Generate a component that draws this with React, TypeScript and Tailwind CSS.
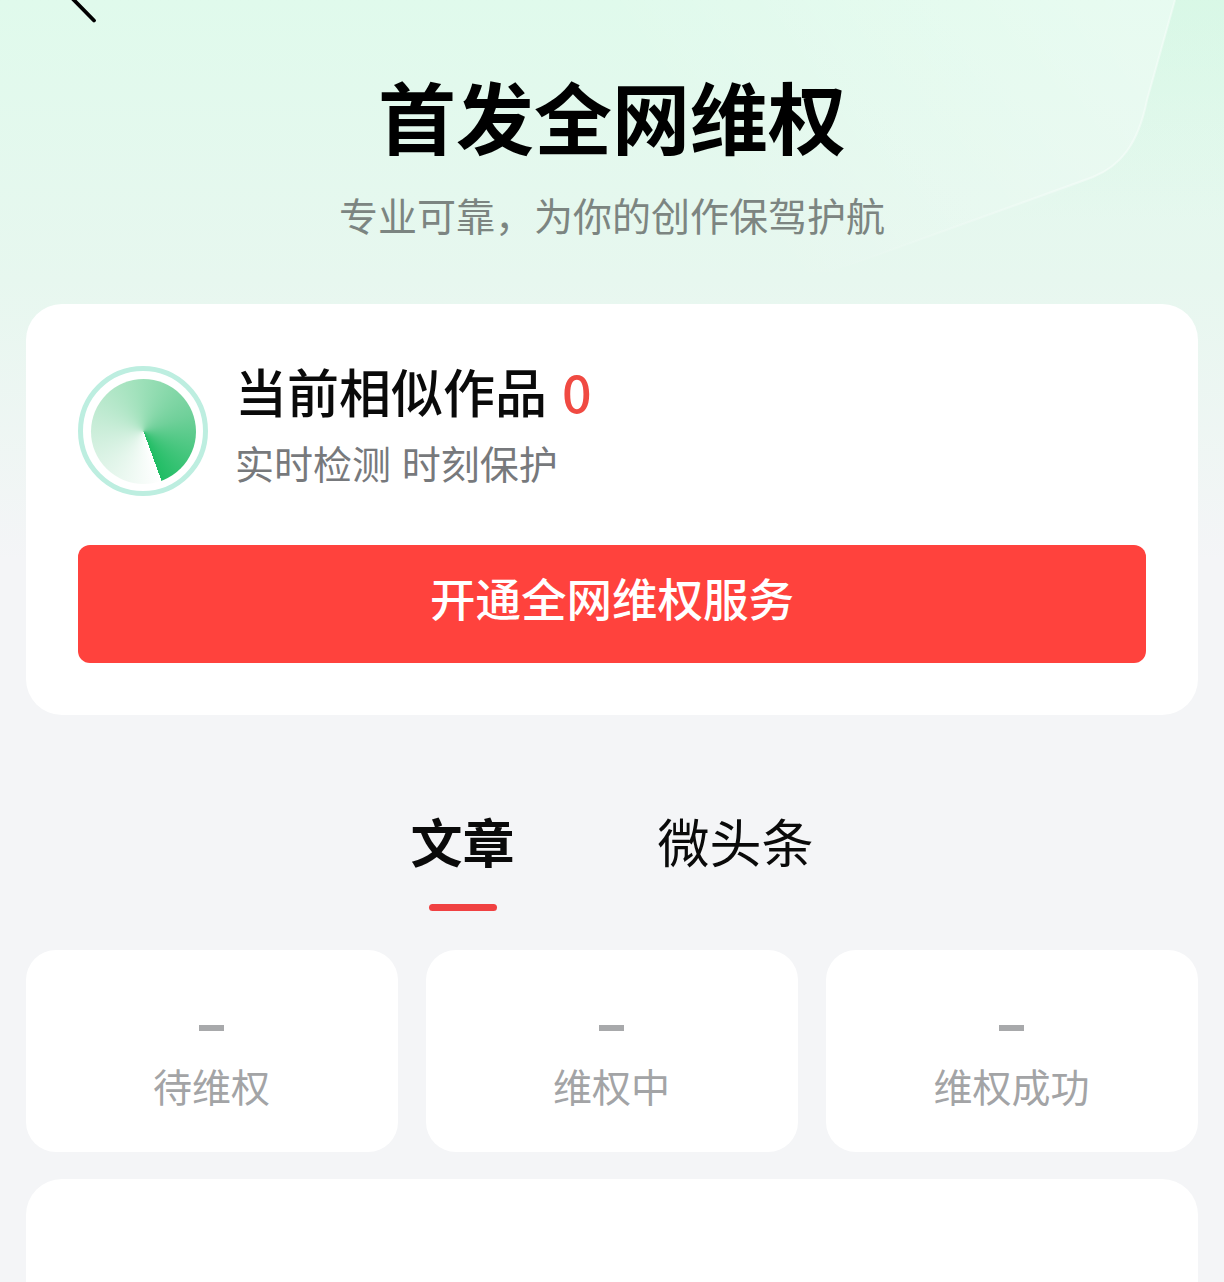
const font = { fontFamily: '"Noto Sans CJK SC", "Noto Sans", sans-serif' };

function Stat({ label }: { label: string }) {
  return (
    <div className="flex h-[202px] flex-col items-center rounded-[30px] bg-white pt-[75px]">
      <div className="-ml-[1px] h-[6px] w-[25px] bg-[#a8a9ab]" />
      <div className="-ml-[1px] mt-[29px] text-[39px] leading-[50px] text-[#a3a4a6]">{label}</div>
    </div>
  );
}

export default function App() {
  return (
    <div style={font} className="relative h-[1282px] w-[1224px] overflow-hidden bg-[#f4f5f7]">
      <div className="absolute inset-x-0 top-0 h-[560px] bg-gradient-to-b from-[#e0faec] via-[#e7f7ef] via-50% to-[#f4f5f7]" />
      <svg className="absolute left-0 top-0" width="1224" height="320" viewBox="0 0 1224 320" fill="none">
        <defs>
          <linearGradient id="inner" gradientUnits="userSpaceOnUse" x1="780" y1="300" x2="1150" y2="60">
            <stop offset="0" stopColor="#ffffff" stopOpacity="0" />
            <stop offset="1" stopColor="#ffffff" stopOpacity="0.24" />
          </linearGradient>
          <linearGradient id="outer" x1="0" y1="0" x2="0" y2="1">
            <stop offset="0" stopColor="#cff5df" stopOpacity="0.42" />
            <stop offset="1" stopColor="#cff5df" stopOpacity="0" />
          </linearGradient>
          <linearGradient id="edge" gradientUnits="userSpaceOnUse" x1="830" y1="272" x2="1100" y2="170">
            <stop offset="0" stopColor="#ffffff" stopOpacity="0" />
            <stop offset="1" stopColor="#ffffff" stopOpacity="0.4" />
          </linearGradient>
        </defs>
        <path d="M1175 0 L1224 0 L1224 220 L1000 220 L1093 177 C1120 166 1138 145 1147 100 Z" fill="url(#outer)" />
        <path d="M1175 0 L1147 100 C1138 145 1120 166 1093 177 L830 272 L0 272 L0 0 Z" fill="url(#inner)" />
        <path d="M1175 0 L1147 100 C1138 145 1120 166 1093 177 L830 272" stroke="url(#edge)" strokeWidth="2" />
      </svg>
      <svg className="absolute left-[60px] top-0" width="44" height="30" viewBox="0 0 44 30" fill="none">
        <path d="M8 -6 L34 20.5" stroke="#000" strokeWidth="3.8" strokeLinecap="round" />
      </svg>

      <div className="relative flex flex-col px-[26px]">
        <header className="flex h-[304px] flex-col items-center pt-[62px]">
          <h1 className="text-[78px] font-bold leading-[106px] text-black">首发全网维权</h1>
          <p className="mt-[20px] text-[39px] leading-[52px] text-[#7c8581]">专业可靠，为你的创作保驾护航</p>
        </header>

        <section className="h-[411px] rounded-[36px] bg-white px-[52px] pt-[62px]">
          <div className="flex h-[130px] items-center">
            <div className="flex h-[130px] w-[130px] shrink-0 items-center justify-center rounded-full border-[5px] border-[#bdeee0] bg-white">
              <div className="h-[105px] w-[105px] rounded-full bg-[conic-gradient(from_160deg,#ffffff,#cdeedb_30%,#a3e2bd_52%,#70d09a_75%,#20bd64)]" />
            </div>
            <div className="-mt-[14px] ml-[27px] flex flex-col">
              <div className="flex items-center text-[52px] font-medium leading-[60px] text-[#0a0a0a]">
                当前相似作品
                <span className="ml-[15px] text-[#f04a42]">0</span>
              </div>
              <div className="mt-[16px] text-[39px] leading-[50px] text-[#77797c] [word-spacing:2px]">实时检测 时刻保护</div>
            </div>
          </div>
          <button className="mt-[49px] flex h-[118px] w-full items-center justify-center rounded-[12px] bg-[#ff423d] pb-[14px] text-[45.5px] font-medium leading-[60px] text-white">
            开通全网维权服务
          </button>
        </section>

        <nav className="flex h-[235px] justify-center pt-[88px]">
          <div className="flex flex-col items-center">
            <span className="text-[52px] font-bold leading-[76px] text-[#0a0a0a]">文章</span>
            <span className="ml-[2px] mt-[25px] h-[7px] w-[68px] rounded-full bg-[#f04142]" />
          </div>
          <span className="ml-[143px] text-[52px] leading-[76px] text-[#0a0a0a]">微头条</span>
        </nav>

        <div className="grid grid-cols-3 gap-[28px]">
          <Stat label="待维权" />
          <Stat label="维权中" />
          <Stat label="维权成功" />
        </div>

        <div className="mt-[27px] h-[200px] rounded-[36px] bg-white" />
      </div>
    </div>
  );
}
